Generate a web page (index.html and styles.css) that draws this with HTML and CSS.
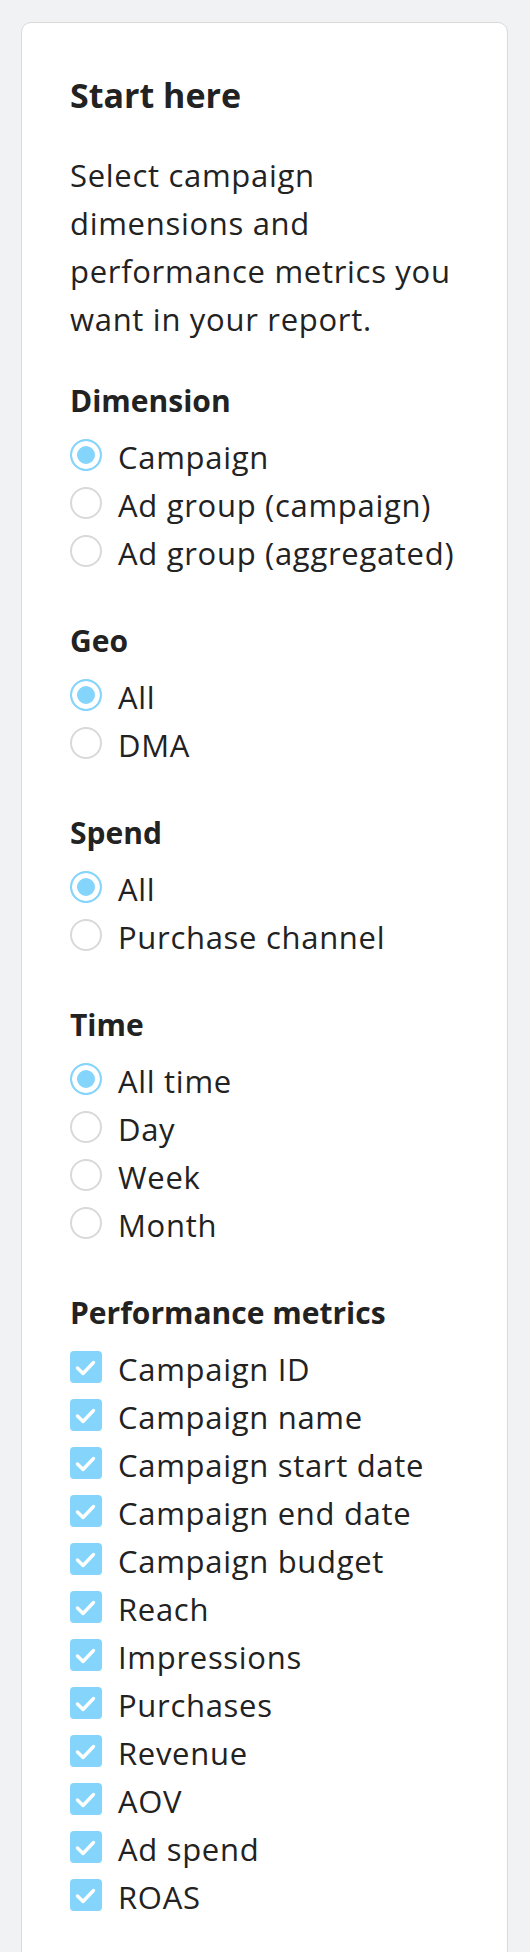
FILE: index.html
```html
<!DOCTYPE html>
<html lang="en">
<head>
  <meta charset="UTF-8" />
  <meta name="viewport" content="width=device-width, initial-scale=1" />
  <title>Report builder</title>
  <link rel="stylesheet" href="styles.css">
</head>
<body>
  <aside class="panel">
    <h2 class="panel-title">Start here</h2>
    <p class="intro">Select campaign dimensions and performance metrics you want in your report.</p>

    <div class="group">
      <h3>Dimension</h3>
      <label class="option"><input type="radio" name="dimension" checked /><span>Campaign</span></label>
      <label class="option"><input type="radio" name="dimension" /><span>Ad group (campaign)</span></label>
      <label class="option"><input type="radio" name="dimension" /><span>Ad group (aggregated)</span></label>
    </div>

    <div class="group">
      <h3>Geo</h3>
      <label class="option"><input type="radio" name="geo" checked /><span>All</span></label>
      <label class="option"><input type="radio" name="geo" /><span>DMA</span></label>
    </div>

    <div class="group">
      <h3>Spend</h3>
      <label class="option"><input type="radio" name="spend" checked /><span>All</span></label>
      <label class="option"><input type="radio" name="spend" /><span>Purchase channel</span></label>
    </div>

    <div class="group">
      <h3>Time</h3>
      <label class="option"><input type="radio" name="time" checked /><span>All time</span></label>
      <label class="option"><input type="radio" name="time" /><span>Day</span></label>
      <label class="option"><input type="radio" name="time" /><span>Week</span></label>
      <label class="option"><input type="radio" name="time" /><span>Month</span></label>
    </div>

    <div class="group" id="metricas">
      <h3>Performance metrics</h3>
    </div>
  </aside>

  <script>
    const metricas = [
      "Campaign ID", "Campaign name", "Campaign start date", "Campaign end date",
      "Campaign budget", "Reach", "Impressions", "Purchases", "Revenue",
      "AOV", "Ad spend", "ROAS"
    ];

    const grupo = document.getElementById('metricas');
    metricas.forEach(m => {
      const label = document.createElement('label');
      label.className = 'option';
      label.innerHTML = `
        <input type="checkbox" checked />
        <span class="check"><svg viewBox="0 0 32 32" width="32" height="32"><path d="M7.5 17 L13 22.5 L23.5 11.5" fill="none" stroke="#fff" stroke-width="3.4" stroke-linecap="round" stroke-linejoin="round"/></svg></span>
        <span>${m}</span>
      `;
      grupo.appendChild(label);
    });
  </script>
</body>
</html>
```

FILE: styles.css
```css
body { font-family: 'Open Sans', 'Liberation Sans', sans-serif; margin: 0; padding: 22px 22px 0 21px; background: #f1f2f4; color: #222; }
.panel { background: white; border: 1px solid #dadada; border-radius: 10px; padding: 48px 48px 60px; }
.panel-title { font-size: 34px; line-height: 48px; font-weight: 700; margin: 0 0 32px; }
.intro { font-size: 31px; line-height: 48px; letter-spacing: 0.7px; margin: 0 0 34px; }
.group { display: flex; flex-direction: column; margin-bottom: 40px; }
.group h3 { font-size: 30px; line-height: 48px; font-weight: 700; margin: 0 0 8px; }
.option { display: flex; align-items: center; gap: 16px; font-size: 31px; line-height: 48px; letter-spacing: 0.7px; cursor: pointer; }
.option input[type="radio"] { appearance: none; width: 32px; height: 32px; margin: 0 0 4px; border: 2px solid #d9d9d9; border-radius: 50%; background: white; flex: none; }
.option input[type="radio"]:checked { border-color: #84d4fb; background: #84d4fb; box-shadow: inset 0 0 0 5px white; }
.option input[type="checkbox"] { display: none; }
.check { width: 32px; height: 32px; margin-bottom: 4px; border-radius: 4px; background: #84d4fb; flex: none; display: flex; }
```
